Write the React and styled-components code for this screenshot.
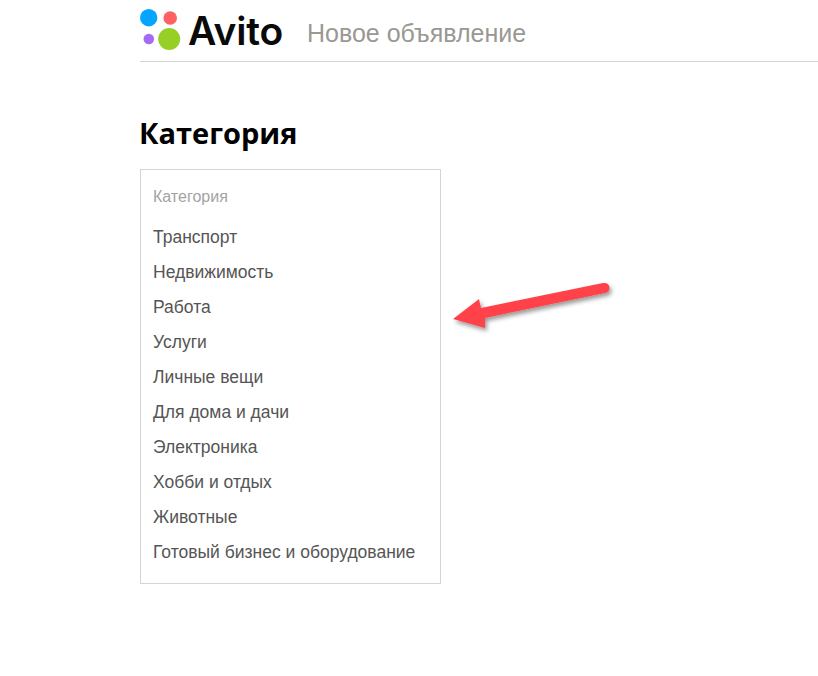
import React from "react";
import styled, { createGlobalStyle } from "styled-components";

const Global = createGlobalStyle`
  html, body {
    margin: 0;
    padding: 0;
    background: #fff;
    font-family: "Liberation Sans", Arial, sans-serif;
  }
`;

const Page = styled.div`
  position: relative;
  width: 818px;
  height: 676px;
  overflow: hidden;
  padding-left: 140px;
  box-sizing: border-box;
`;

const Header = styled.header`
  display: flex;
  align-items: flex-start;
  height: 61px;
  border-bottom: 1px solid #d4d4d4;
`;

const LogoMark = styled.svg`
  display: block;
  flex: none;
  margin-top: 9px;
`;

const LogoText = styled.span`
  margin-left: 7px;
  margin-top: 7px;
  font-family: Inter, sans-serif;
  font-weight: 600;
  font-size: 39px;
  line-height: 47px;
  letter-spacing: -0.2px;
  color: #0a0a0a;
`;

const HeaderTitle = styled.span`
  margin-left: 24px;
  margin-top: 19px;
  font-size: 25px;
  line-height: 29px;
  color: #999893;
`;

const Title = styled.h1`
  margin: 52px 0 0 -1px;
  font-family: "Open Sans", sans-serif;
  font-weight: 700;
  font-size: 29px;
  line-height: 38px;
  color: #000;
`;

const CategoryBox = styled.section`
  width: 301px;
  height: 415px;
  margin-top: 17px;
  padding: 17px 12px 0;
  box-sizing: border-box;
  border: 1px solid #d4d4d4;
`;

const BoxLabel = styled.div`
  font-size: 16px;
  line-height: 20px;
  color: #a3a3a3;
`;

const CategoryList = styled.ul`
  list-style: none;
  margin: 13px 0 0;
  padding: 0;
`;

const CategoryItem = styled.li`
  font-size: 17.5px;
  line-height: 35px;
  color: #555;
  white-space: nowrap;
`;

const Arrow = styled.svg`
  position: absolute;
  left: 440px;
  top: 270px;
`;

const categories = [
  "Транспорт",
  "Недвижимость",
  "Работа",
  "Услуги",
  "Личные вещи",
  "Для дома и дачи",
  "Электроника",
  "Хобби и отдых",
  "Животные",
  "Готовый бизнес и оборудование",
];

export default function App() {
  return (
    <>
      <Global />
      <Page>
        <Header>
          <LogoMark width="41" height="42" viewBox="0 0 41 42">
            <circle cx="8.7" cy="8.7" r="8.7" fill="#04a5ff" />
            <circle cx="30.2" cy="9" r="6.8" fill="#ff6163" />
            <circle cx="8.8" cy="30" r="5.3" fill="#a66bf6" />
            <circle cx="29.2" cy="30" r="11" fill="#97cf26" />
          </LogoMark>
          <LogoText>Avito</LogoText>
          <HeaderTitle>Новое объявление</HeaderTitle>
        </Header>
        <Title>Категория</Title>
        <CategoryBox>
          <BoxLabel>Категория</BoxLabel>
          <CategoryList>
            {categories.map((name) => (
              <CategoryItem key={name}>{name}</CategoryItem>
            ))}
          </CategoryList>
        </CategoryBox>
        <Arrow width="180" height="70" viewBox="0 0 180 70">
          <defs>
            <filter id="arrowShadow" x="-20%" y="-30%" width="140%" height="170%">
              <feDropShadow dx="2" dy="3" stdDeviation="2" floodColor="#000" floodOpacity="0.4" />
            </filter>
          </defs>
          <path
            d="M163 13 L164 13 A5 5 0 0 1 165 23 L45 48 L45 58 L13 49 L39 29 L41 38 Z"
            fill="#ff4348"
            filter="url(#arrowShadow)"
          />
        </Arrow>
      </Page>
    </>
  );
}
